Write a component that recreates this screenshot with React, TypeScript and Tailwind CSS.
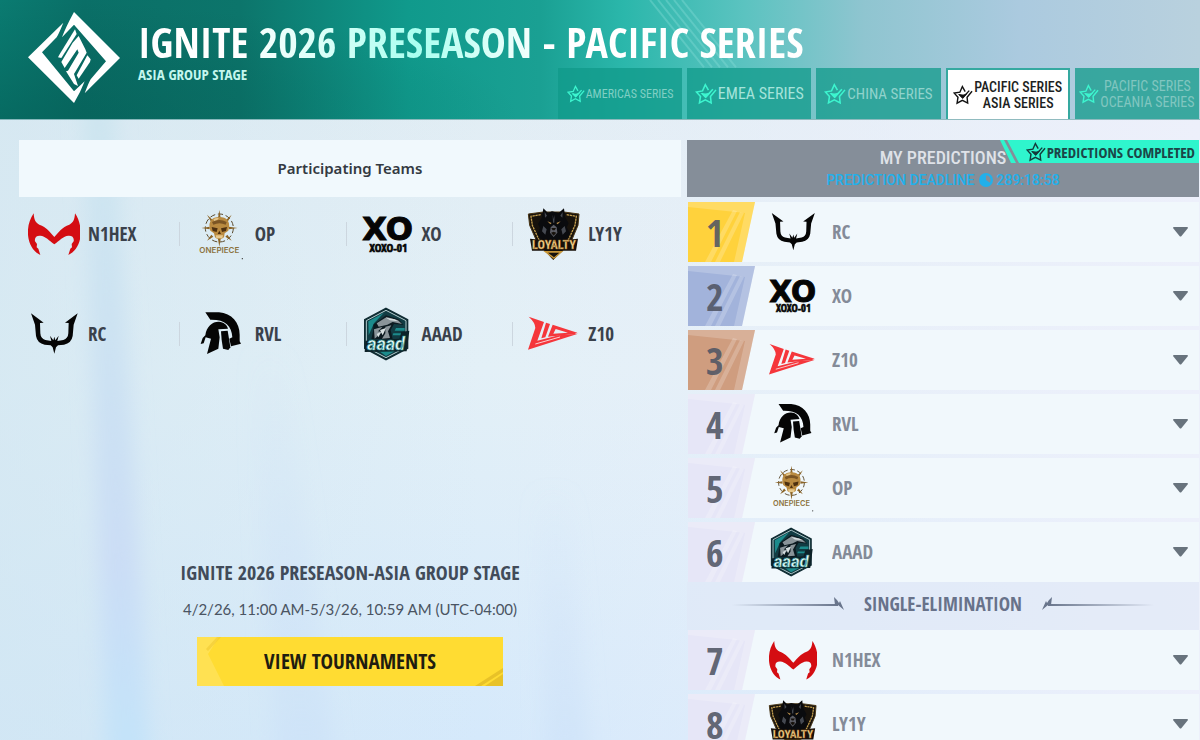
import type { ReactNode } from "react";

type Team = { id: string; logo: ReactNode };

const N1hexLogo = () => (
  <svg viewBox="0 0 156 156" className="size-full" aria-hidden="true">
    <path
      fill="#d40d12"
      d="M17 16C2 38 -4 66 2 94C7 116 20 134 37 141L31 122L26 118L27 108L21 100C19 88 26 82 37 83C52 84 64 98 79 109C94 98 106 84 121 83C132 82 139 88 137 100L131 108L132 118L127 122L121 141C138 134 151 116 156 94C161 66 156 38 141 16C140 34 136 44 124 50C102 58 92 72 79 87C66 72 56 58 34 50C22 44 18 34 17 16Z"
    />
  </svg>
);

const RcLogo = () => (
  <svg viewBox="0 0 156 156" className="size-full" aria-hidden="true">
    <path
      fill="#050505"
      d="M9 16L47 44L36 45L37 76Q38 92 52 96L70 99L66 83L76 97L79 86L82 97L92 83L88 99L106 96Q120 92 121 76L122 45L111 44L149 16L137 50L134 84Q130 106 108 110L90 112L84 118L79 137L74 118L68 112L50 110Q28 106 24 84L21 50Z"
    />
  </svg>
);

const RvlLogo = () => (
  <svg viewBox="0 0 156 156" className="size-full" aria-hidden="true">
    <g fill="#050505">
      <path d="M31 13H72C110 16 134 44 134 80V100L138 107L108 115L103 92L112 88C110 52 90 34 46 35Z" />
      <path d="M31 82C34 54 54 40 72 41C86 42 96 50 99 62L70 64L74 88L70 122L36 138L48 92L32 88L26 106L17 108L23 90Z" />
      <path d="M78 70L98 68L102 92L106 118L100 126L84 122L80 96Z" />
    </g>
  </svg>
);

const XoLogo = () => (
  <svg viewBox="0 0 156 156" className="size-full overflow-visible" aria-hidden="true">
    <g fill="#050505" textAnchor="middle" fontWeight="700">
      <text x="77" y="96" fontSize="96" fontFamily="DejaVu Sans, sans-serif" stroke="#050505" strokeWidth="3">
        XO
      </text>
      <text x="79" y="131" fontSize="34" fontFamily="Open Sans Condensed, sans-serif" stroke="#050505" strokeWidth="2">
        XOXO-01
      </text>
    </g>
  </svg>
);

const Z10Logo = () => (
  <svg viewBox="0 0 156 156" className="size-full" aria-hidden="true">
    <g fill="#f5363b">
      <path d="M2 26L48 42L28 98L92 82L150 77L0 125L22 60Q22 44 2 26Z" />
      <path d="M54 44L66 48L52 88L40 91Z" />
      <path fillRule="evenodd" d="M74 50L148 74L140 78L60 86ZM83 63L76 77L120 74Z" />
    </g>
    <path d="M22 108L96 87" stroke="#fbd0d4" strokeWidth="3" />
  </svg>
);

const OpLogo = () => (
  <svg viewBox="0 0 156 156" className="size-full overflow-visible" aria-hidden="true">
    <circle cx="73" cy="60" r="42" fill="none" stroke="#5b4a2c" strokeWidth="3" strokeDasharray="16 8" />
    <g fill="#8b6427">
      <path d="M73 6L77 30H69ZM73 116L78 88H68ZM19 60L44 56V64ZM128 60L102 56V64Z" />
      <path d="M36 20L53 36L48 41ZM110 20L93 36L98 41ZM36 98L49 80L55 86ZM110 98L97 80L91 86Z" />
    </g>
    <path
      fill="#b98a40"
      d="M73 27C50 27 41 42 44 58L46 68L57 76L60 88L66 92H80L87 88L89 76L100 68L102 58C105 42 96 27 73 27Z"
    />
    <path fill="#e6c88c" d="M62 82H84L82 91H64ZM55 34Q64 28 72 31L60 42Z" />
    <path fill="#4d3010" d="M50 57L68 61L65 72L53 69ZM96 57L78 61L81 72L93 69ZM73 68L78 78H68Z" />
    <path fill="#7b5524" d="M51 42Q73 30 95 42L92 50Q73 41 55 50Z" />
    <text x="73" y="136" fontSize="24" fontWeight="600" fill="#8c7340" textAnchor="middle" fontFamily="Inter, sans-serif">
      ONEPIECE
    </text>
    <circle cx="142" cy="152" r="2" fill="#333" />
  </svg>
);

const LoyaltyLogo = () => (
  <svg viewBox="0 0 156 156" className="size-full overflow-visible" aria-hidden="true">
    <path fill="#17120c" stroke="#4a3717" strokeWidth="3" d="M1 18L46 12H108L153 18L150 52L128 104L76 155L28 104L5 52Z" />
    <path fill="none" stroke="#c9a352" strokeWidth="4" strokeDasharray="7 2" d="M38 20L9 25L13 52L34 98M116 20L145 25L141 52L120 98" />
    <path
      fill="#0a0b0e"
      d="M46 1L60 15L72 10L92 15L108 1L111 26L122 46L116 58L126 76L114 96H40L28 78L36 60L30 48L42 28Z"
    />
    <path fill="#454951" d="M50 12L57 23L51 29ZM104 12L97 23L103 29ZM74 20L77 34L80 20L79 44H75ZM46 54L56 64L52 80L42 70ZM110 54L100 64L104 80L114 70Z" />
    <path fill="#b88f4b" d="M58 40L71 45L67 49ZM98 40L85 45L89 49Z" />
    <path fill="#5d5e66" d="M68 58L77 50L86 58L88 74L77 87L66 74Z" />
    <path fill="#17120c" d="M70 60H84L80 67H74ZM69 74L77 71L85 74L77 83Z" />
    <path fill="#17100a" d="M6 92L78 99L150 92L144 128H12Z" />
    <text x="78" y="124" fontSize="37" fontWeight="700" fill="#f6d48c" stroke="#8c5b1b" strokeWidth="1" textAnchor="middle" fontFamily="Roboto Condensed, sans-serif">
      LOYALTY
    </text>
    <path fill="#c79638" fillRule="evenodd" d="M46 129H106L78 153ZM60 134L78 148L94 134Z" />
  </svg>
);

const AaadLogo = () => (
  <svg viewBox="0 0 156 156" className="size-full overflow-visible" aria-hidden="true">
    <path fill="#0b2b31" stroke="#102c33" strokeWidth="4" d="M72 1L137 35V121L72 155L8 121V35Z" />
    <path fill="#123c43" stroke="#b5cdd0" strokeWidth="3" d="M72 7L132 38V118L72 149L13 118V38Z" />
    <path fill="#1c8b8c" d="M19 40L66 14L36 46L20 82ZM102 60H128V68H98ZM94 76H126V82H92ZM24 114L52 130L72 144L98 130Z" />
    <path fill="#0c1a20" d="M34 50L72 22L110 34L124 50L96 48L86 66L92 94H28L34 66Z" />
    <path fill="#8a9499" d="M44 46L74 27L108 37L120 48L92 42L76 50L50 56ZM36 64L62 56L48 70L62 72L38 92ZM70 56L88 52L78 70L84 90L60 92L70 76Z" />
    <path fill="#d7dfe0" d="M72 29L98 34L108 40L84 37ZM54 66L72 60L62 82ZM44 78L56 72L50 88Z" />
    <path fill="#0d2228" d="M10 98L112 92L118 72L142 68L134 130L8 132Z" />
    <text x="72" y="127" fontSize="54" fontWeight="700" fontStyle="italic" fill="#eefcfb" stroke="#2f8f90" strokeWidth="2" textAnchor="middle" fontFamily="Roboto, sans-serif">
      aaad
    </text>
  </svg>
);

const N1HEX: Team = { id: "N1HEX", logo: <N1hexLogo /> };
const OP: Team = { id: "OP", logo: <OpLogo /> };
const XO: Team = { id: "XO", logo: <XoLogo /> };
const LY1Y: Team = { id: "LY1Y", logo: <LoyaltyLogo /> };
const RC: Team = { id: "RC", logo: <RcLogo /> };
const RVL: Team = { id: "RVL", logo: <RvlLogo /> };
const AAAD: Team = { id: "AAAD", logo: <AaadLogo /> };
const Z10: Team = { id: "Z10", logo: <Z10Logo /> };

const TEAMS = [N1HEX, OP, XO, LY1Y, RC, RVL, AAAD, Z10];
const QUALIFIED = [RC, XO, Z10, RVL, OP, AAAD];
const ELIMINATION = [N1HEX, LY1Y];

const TABS = [
  { lines: ["AMERICAS SERIES"], size: "text-[12px]", color: "text-[#7fcfc4]", icon: "size-[18px]" },
  { lines: ["EMEA SERIES"], size: "text-[16px]", color: "text-[#a5e3da]", icon: "size-[22px]" },
  { lines: ["CHINA SERIES"], size: "text-[15px]", color: "text-[#90d3cc]", icon: "size-[22px]" },
  { lines: ["PACIFIC SERIES", "ASIA SERIES"], size: "text-[14px] font-medium", color: "text-[#1d1f22]", icon: "size-5", active: true },
  { lines: ["PACIFIC SERIES", "OCEANIA SERIES"], size: "text-[14px]", color: "text-[#81c6c0]", icon: "size-5" },
];

const RANK_COLORS = ["text-[#ffd23c]", "text-[#a2b3db]", "text-[#cf9d7f]"];

function StarCheck({ className }: { className: string }) {
  return (
    <svg viewBox="0 0 64 62" className={className} fill="none" stroke="currentColor" strokeWidth="4.5" aria-hidden="true">
      <path d="M39 20L30 4L22 22L4 25L16 38L13 57L30 48L47 57L45 38L61 19" />
      <path d="M20 29L31 40L52 17" />
      <path d="M22 31L31 40L40 30L31 32Z" fill="currentColor" />
    </svg>
  );
}

function BrandLogo() {
  return (
    <svg viewBox="0 0 276 276" className="ml-7 mt-3 size-[92px] shrink-0" fill="#fff" aria-hidden="true">
      <path d="M138 0L276 138L170 244Q182 212 188 202L234 148L138 38L102 76Q112 48 138 0Z" />
      <path d="M106 32Q94 62 86 76L42 121L138 238L170 208Q158 240 138 273L0 136Z" />
      <path d="M141 52L146 66L100 138L90 136L94 128Z" />
      <path d="M134 92L152 72L172 112L176 122L138 186L150 222L138 216L114 178L120 176L152 122L148 112L110 168L100 150Z" />
      <path d="M178 130L188 142L186 150L152 200L146 190Z" />
    </svg>
  );
}

function HeaderArt() {
  return (
    <svg className="absolute inset-0 size-full" preserveAspectRatio="none" viewBox="0 0 1200 120" aria-hidden="true">
      <defs>
        <linearGradient id="head" x1="0" x2="1">
          <stop offset="0" stopColor="#0a7b71" />
          <stop offset="0.07" stopColor="#0a6f67" />
          <stop offset="0.2" stopColor="#0c756b" />
          <stop offset="0.34" stopColor="#109a8c" />
          <stop offset="0.45" stopColor="#1aa093" />
          <stop offset="0.52" stopColor="#2bb7ab" />
          <stop offset="0.62" stopColor="#5bc3c0" />
          <stop offset="0.72" stopColor="#8fc5d0" />
          <stop offset="0.85" stopColor="#abcadf" />
          <stop offset="1" stopColor="#b9d1de" />
        </linearGradient>
        <radialGradient id="shade" cx="0" cy="1" r="1">
          <stop offset="0" stopColor="#004c45" stopOpacity="0.35" />
          <stop offset="1" stopColor="#004c45" stopOpacity="0" />
        </radialGradient>
      </defs>
      <rect width="1200" height="120" fill="url(#head)" />
      <rect width="520" height="120" fill="url(#shade)" />
      <path d="M650 0L704 68M658 0L712 68M666 0L720 68M674 0L728 68M682 0L736 68" stroke="#8be0da" strokeOpacity="0.35" strokeWidth="2" />
    </svg>
  );
}

function Header() {
  return (
    <header className="relative flex min-h-30 shrink-0 overflow-hidden border-b border-[#0b6f68]/40">
      <HeaderArt />
      <div className="relative flex flex-1">
        <BrandLogo />
        <div className="ml-[18px] flex flex-1 flex-col">
          <h1 className="w-fit whitespace-nowrap bg-linear-to-r from-white from-15% via-[#a9fff0] via-42% to-white to-62% bg-clip-text pt-4 font-['Open_Sans_Condensed','Roboto_Condensed',sans-serif] text-[42px] leading-[52px] font-bold text-transparent">
            IGNITE 2026 PRESEASON - PACIFIC SERIES
          </h1>
          <div className="flex flex-1 justify-between">
            <p className="font-['Open_Sans_Condensed','Roboto_Condensed',sans-serif] text-[15px] leading-3 font-bold whitespace-nowrap text-[#c4f7ee]">
              ASIA GROUP STAGE
            </p>
            <nav className="grid w-[642px] shrink-0 grid-cols-5 gap-[5px] pr-px">
              {TABS.map((tab) => (
                <button
                  key={tab.lines.join(" ")}
                  type="button"
                  aria-pressed={!!tab.active}
                  className={`flex items-center justify-center gap-px whitespace-nowrap ${
                    tab.active ? "border-2 border-b-0 border-[#35a9a0] bg-white" : "bg-[#10998a]/75"
                  }`}
                >
                  <StarCheck className={`${tab.icon} shrink-0 ${tab.active ? "text-[#111]" : "text-[#3df5cf]"}`} />
                  <span className={`font-['Roboto_Condensed',sans-serif] leading-4 ${tab.size} ${tab.color}`}>
                    {tab.lines.map((line) => (
                      <span key={line} className="block">
                        {line}
                      </span>
                    ))}
                  </span>
                </button>
              ))}
            </nav>
          </div>
        </div>
      </div>
    </header>
  );
}

function TeamCell({ team, divided }: { team: Team; divided: boolean }) {
  return (
    <li className="flex h-[52px] items-center gap-2">
      <span className={`h-6 w-px ${divided ? "bg-[#ccd6df]" : ""}`} />
      <span className="ml-[7px] size-[52px] shrink-0">{team.logo}</span>
      <span className="font-['Open_Sans_Condensed','Roboto_Condensed',sans-serif] text-[19px] font-bold text-[#3a414b]">
        {team.id}
      </span>
    </li>
  );
}

function RankBadge({ rank }: { rank: number }) {
  return (
    <span className="relative flex w-[67px] shrink-0 items-center pl-[18px]">
      <svg
        viewBox="0 0 67 60"
        className={`absolute inset-0 size-full ${RANK_COLORS[rank - 1] ?? "text-[#e6e6f7]"}`}
        aria-hidden="true"
      >
        <path d="M0 0H67L54 60H0Z" fill="currentColor" />
        <path d="M0 0H67L54 60H46L57 11L0 5Z" fill="#fff" fillOpacity="0.2" />
        <path d="M17 60L45 8L49 9L23 60ZM27 60L52 10L56 11L32 60Z" fill="#fff" fillOpacity="0.2" />
      </svg>
      <span className="relative font-['Open_Sans_Condensed','Roboto_Condensed',sans-serif] text-[38px] leading-none font-bold text-[#505564]/90">
        {rank}
      </span>
    </span>
  );
}

function PredictionRow({ rank, team }: { rank: number; team: Team }) {
  return (
    <li className="flex h-15 bg-[#f1f8fc]">
      <RankBadge rank={rank} />
      <div className="relative flex flex-1 items-center">
        <span className="ml-[14px] size-12 shrink-0">{team.logo}</span>
        <select
          aria-label={`Place ${rank}`}
          defaultValue={team.id}
          className="h-full flex-1 appearance-none bg-transparent pl-[15px] font-['Open_Sans_Condensed','Roboto_Condensed',sans-serif] text-[19px] font-bold text-[#848b98] outline-none"
        >
          {TEAMS.map((t) => (
            <option key={t.id}>{t.id}</option>
          ))}
        </select>
        <svg viewBox="0 0 15 10" className="pointer-events-none absolute right-[11px] h-[10px] w-[15px]" aria-hidden="true">
          <path d="M0 1Q0 0 1 0H14Q15 0 15 1L8.500 9Q7.500 10 6.500 9Z" fill="#68737d" />
        </svg>
      </div>
    </li>
  );
}

function Arrow({ flip }: { flip?: boolean }) {
  return (
    <svg viewBox="0 0 112 14" className={`h-[14px] w-28 ${flip ? "-scale-x-100" : ""}`} aria-hidden="true">
      <defs>
        <linearGradient id="tail" x1="0" x2="1">
          <stop offset="0" stopColor="#69758c" stopOpacity="0" />
          <stop offset="1" stopColor="#69758c" />
        </linearGradient>
      </defs>
      <path d="M0 7H106V9H0Z" fill="url(#tail)" />
      <path d="M102 0L105 3L107 6L108 4L112 13L106 8L103 8Z" fill="#69758c" />
    </svg>
  );
}

function Predictions() {
  return (
    <section className="flex min-h-0 flex-col overflow-y-auto [scrollbar-width:none]">
      <div className="relative h-[57px] shrink-0 bg-[#858e99] pt-1.5 text-center">
        <h2 className="font-['Roboto_Condensed',sans-serif] text-[18px] leading-6 font-medium text-[#dfe2e8]">
          MY PREDICTIONS
        </h2>
        <p className="flex items-center justify-center gap-1 font-['Roboto',sans-serif] text-sm leading-5 font-medium text-[#22b0ea]">
          PREDICTION DEADLINE
          <svg viewBox="0 0 16 16" className="size-[14px]" aria-hidden="true">
            <circle cx="8" cy="8" r="8" fill="currentColor" />
            <path d="M8 2.500V8L12.500 11A5.500 5.500 0 0 0 8 2.500Z" fill="#858e99" />
          </svg>
          289:18:58
        </p>
        <div className="absolute top-0 right-0 flex h-[23px] w-[199px] items-center justify-end gap-px pr-1">
          <svg viewBox="0 0 199 23" className="absolute inset-0 size-full" aria-hidden="true">
            <path d="M4 0H7L19 23H16Z" fill="#858e99" />
            <path d="M7 0H199V23H19ZM0 0H4L16 23H11Z" fill="#2ff5cd" />
          </svg>
          <StarCheck className="relative size-5 text-[#14393a]" />
          <span className="relative font-['Open_Sans_Condensed','Roboto_Condensed',sans-serif] text-[15px] leading-5 font-bold whitespace-nowrap text-[#1c4547]">
            PREDICTIONS COMPLETED
          </span>
        </div>
      </div>
      <ol className="mt-[5px] flex flex-col gap-1 pl-px">
        {QUALIFIED.map((team, i) => (
          <PredictionRow key={team.id} rank={i + 1} team={team} />
        ))}
      </ol>
      <div className="flex h-12 shrink-0 items-center justify-center gap-5 bg-[#dfe7f6]/60 pb-1">
        <Arrow />
        <h3 className="font-['Open_Sans_Condensed','Roboto_Condensed',sans-serif] text-[19px] leading-6 font-bold text-[#68728a]">
          SINGLE-ELIMINATION
        </h3>
        <Arrow flip />
      </div>
      <ol className="flex flex-col gap-1 pl-px" start={7}>
        {ELIMINATION.map((team, i) => (
          <PredictionRow key={team.id} rank={i + 7} team={team} />
        ))}
      </ol>
    </section>
  );
}

function PageArt() {
  return (
    <div className="absolute inset-0 bg-linear-to-b from-[#e1ecf3] via-[#e3f0f7] to-[#d5e9fb]">
      <div className="absolute inset-0 bg-linear-to-r from-[#cfe5f0]/60 via-transparent via-40% to-[#edf0fb]" />
      <svg viewBox="0 0 1200 740" preserveAspectRatio="none" className="absolute inset-0 size-full" aria-hidden="true">
        <defs>
          <filter id="soft" x="-200%" width="500%">
            <feGaussianBlur stdDeviation="10 6" />
          </filter>
          <linearGradient id="beam" x1="0" x2="0" y1="0" y2="1">
            <stop offset="0" stopColor="#c2e2ed" stopOpacity="0.5" />
            <stop offset="0.7" stopColor="#c8daf6" stopOpacity="0.8" />
            <stop offset="1" stopColor="#bfe3fa" stopOpacity="0.8" />
          </linearGradient>
          <linearGradient id="haze" x1="0" x2="0" y1="0" y2="1">
            <stop offset="0" stopColor="#c9dcf5" stopOpacity="0" />
            <stop offset="1" stopColor="#c9dff8" stopOpacity="0.5" />
          </linearGradient>
        </defs>
        <path d="M82 100H114L150 760H106Z" fill="url(#beam)" filter="url(#soft)" />
        <path d="M250 340H285L335 760H275Z" fill="url(#haze)" filter="url(#soft)" />
        <path d="M535 480H570L590 760H545Z" fill="url(#haze)" filter="url(#soft)" />
      </svg>
    </div>
  );
}

export default function App() {
  return (
    <div className="relative isolate flex h-screen flex-col overflow-hidden">
      <div className="absolute inset-0 -z-10">
        <PageArt />
      </div>
      <Header />
      <main className="grid min-h-0 flex-1 grid-cols-[669fr_512fr] gap-1.5 pt-5 pr-px pl-3">
        <section className="flex min-h-0 flex-col">
          <h2 className="ml-[7px] flex h-[57px] shrink-0 items-center justify-center bg-[#f1f9fd] font-['Noto_Sans',sans-serif] text-[15px] font-semibold text-[#343a42]">
            Participating Teams
          </h2>
          <ul className="mt-[11px] mr-0.5 grid grid-cols-4 gap-y-12">
            {TEAMS.map((team, i) => (
              <TeamCell key={team.id} team={team} divided={i % 4 !== 0} />
            ))}
          </ul>
          <div className="mt-auto flex flex-col items-center pb-[54px] pl-[7px]">
            <h3 className="font-['Open_Sans_Condensed','Roboto_Condensed',sans-serif] text-[20px] leading-7 font-bold text-[#414b59]">
              IGNITE 2026 PRESEASON-ASIA GROUP STAGE
            </h3>
            <p className="mt-2.5 font-['Lato',sans-serif] text-[15px] leading-6 text-[#4a5462]">
              4/2/26, 11:00 AM-5/3/26, 10:59 AM (UTC-04:00)
            </p>
            <button
              type="button"
              className="relative mt-4 flex h-[49px] w-[306px] items-center justify-center bg-[#ffdc32] font-['Open_Sans_Condensed','Roboto_Condensed',sans-serif] text-[21px] font-bold text-[#1f1d10]"
            >
              <svg viewBox="0 0 306 49" className="absolute inset-0 size-full" aria-hidden="true">
                <path d="M0 0H22L11 17L27 49H0Z" fill="#fff" fillOpacity="0.16" />
                <path d="M9 12L20 0H24L11 14Z" fill="#eec62a" fillOpacity="0.5" />
                <path d="M278 49L306 31V35L284 49ZM288 49L306 37V49Z" fill="#d9b021" fillOpacity="0.6" />
              </svg>
              <span className="relative">VIEW TOURNAMENTS</span>
            </button>
          </div>
        </section>
        <Predictions />
      </main>
    </div>
  );
}
